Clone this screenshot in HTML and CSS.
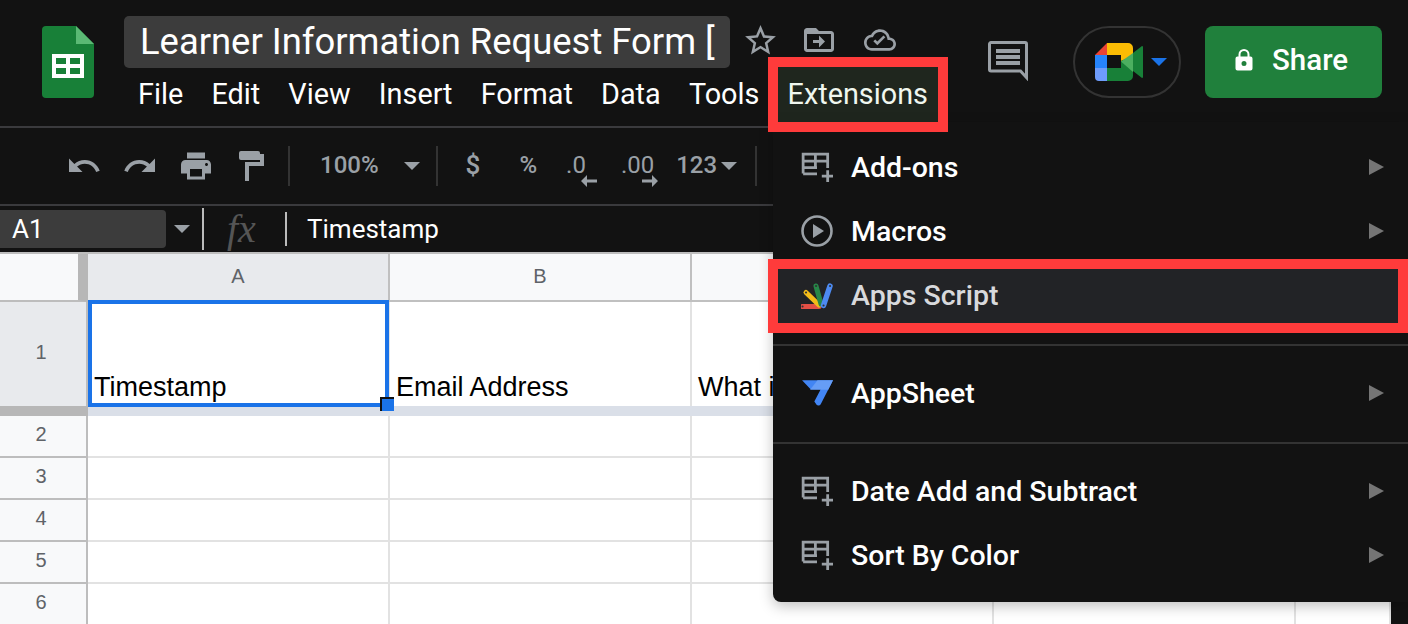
FILE: index.html
```html
<!DOCTYPE html>
<html lang="en">

<head>
    <meta charset="UTF-8">
    <title>Learner Information Request Form</title>
    <link rel="stylesheet" href="styles.css">
</head>

<body>
    <svg class="defs" width="0" height="0">
        <symbol id="addon" viewBox="0 0 30 30">
            <path d="M2 21V3h23v13M2 9.500h23M2 15.500h13M13.500 3v12.500M2 21.500h13M25 18v11M19.500 23.500h11" fill="none" stroke="#9aa0a6" stroke-width="2.600"/>
        </symbol>
    </svg>

    <header class="topbar">
        <svg class="logo" viewBox="0 0 52 72">
            <path d="M4 0h30l18 18v50a4 4 0 0 1-4 4H4a4 4 0 0 1-4-4V4a4 4 0 0 1 4-4z" fill="#188038"/>
            <path d="M34 0l18 18H34z" fill="#5bb974"/>
            <path d="M10 28h32v24H10zM14 32v6h10v-6zM28 32v6h10v-6zM14 42v6h10v-6zM28 42v6h10v-6z" fill="#fff" fill-rule="evenodd"/>
        </svg>
        <div class="title-block">
            <div class="title-row">
                <div class="title">Learner Information Request Form [</div>
                <svg class="title-icon star" viewBox="0 0 24 24"><path d="M22 9.240l-7.190-.62L12 2 9.190 8.630 2 9.240l5.460 4.730L5.820 21 12 17.270 18.180 21l-1.630-7.030L22 9.240zM12 15.400l-3.760 2.270 1-4.280-3.320-2.880 4.380-.38L12 6.100l1.710 4.040 4.380.38-3.320 2.880 1 4.280L12 15.400z"/></svg>
                <svg class="title-icon folder" viewBox="0 0 24 24"><path d="M20 6h-8l-2-2H4c-1.100 0-2 .9-2 2v12c0 1.100.9 2 2 2h16c1.100 0 2-.9 2-2V8c0-1.100-.9-2-2-2zm0 12H4V8h16v10zM12 17l4-4-4-4v3H8v2h4z"/></svg>
                <svg class="title-icon cloud" viewBox="0 0 24 24"><path d="M19.350 10.040C18.670 6.590 15.640 4 12 4 9.110 4 6.600 5.640 5.350 8.040 2.340 8.360 0 10.910 0 14c0 3.310 2.690 6 6 6h13c2.760 0 5-2.240 5-5 0-2.640-2.050-4.780-4.650-4.960zM19 18H6c-2.210 0-4-1.790-4-4 0-2.050 1.530-3.760 3.560-3.970l1.070-.11.5-.95C8.080 7.140 9.940 6 12 6c2.620 0 4.880 1.860 5.390 4.430l.3 1.500 1.530.11c1.560.1 2.780 1.410 2.780 2.960 0 1.650-1.350 3-3 3zM10 16l-3-3 1.400-1.400 1.600 1.600 4.600-4.600L16 10z"/></svg>
            </div>
            <nav class="menubar">
                <span>File</span>
                <span>Edit</span>
                <span>View</span>
                <span>Insert</span>
                <span>Format</span>
                <span>Data</span>
                <span>Tools</span>
                <span>Extensions</span>
            </nav>
        </div>
        <div class="actions">
            <svg class="comment" viewBox="0 0 40 40">
                <path d="M3 1.500h34a1.500 1.500 0 0 1 1.500 1.500v33.500l-6-6.500H3A1.500 1.500 0 0 1 1.500 28.500V3A1.500 1.500 0 0 1 3 1.500z" fill="none" stroke="#9aa0a6" stroke-width="3"/>
                <path d="M8 8h24v4H8zM8 14h24v4H8zM8 20h24v4H8z" fill="#9aa0a6"/>
            </svg>
            <div class="meet">
                <svg class="meet-logo" viewBox="0 0 48 38">
                    <path d="M12 0L0 12h12z" fill="#ea4335"/>
                    <path d="M12 0h21a5 5 0 0 1 5 5v8l-12 5v-6H12z" fill="#fbbc04"/>
                    <path d="M0 12h12v13H0z" fill="#2684fc"/>
                    <path d="M0 25h12v13H4a4 4 0 0 1-4-4z" fill="#6e9cfb"/>
                    <path d="M12 25h14v-7l12-5v20a5 5 0 0 1-5 5H12z" fill="#188038"/>
                    <path d="M26 18.500l12-8.500v19z" fill="#4caf60"/>
                    <path d="M38 10l9-7a1 1 0 0 1 1 1v30a1 1 0 0 1-1 1l-9-7z" fill="#188038"/>
                </svg>
                <span class="meet-arrow"></span>
            </div>
            <div class="share">
                <svg class="lock" viewBox="0 0 18 22"><path d="M15.500 7.500H14.500V5.500a5.500 5.500 0 0 0-11 0v2H2.500A2 2 0 0 0 .5 9.500v10a2 2 0 0 0 2 2h13a2 2 0 0 0 2-2v-10a2 2 0 0 0-2-2zM5.500 5.500a3.500 3.500 0 0 1 7 0v2h-7zM9 17a2.500 2.500 0 1 1 0-5 2.500 2.500 0 0 1 0 5z" fill="#fff"/></svg>
                <span>Share</span>
            </div>
        </div>
    </header>

    <div class="toolbar">
        <svg class="tool undo" viewBox="0 0 24 24"><path d="M12.500 8c-2.650 0-5.050.99-6.900 2.600L2 7v9h9l-3.620-3.620c1.390-1.160 3.160-1.880 5.120-1.880 3.540 0 6.550 2.310 7.600 5.500l2.370-.78C21.080 11.030 17.150 8 12.500 8z"/></svg>
        <svg class="tool redo" viewBox="0 0 24 24"><path d="M18.400 10.600C16.550 8.990 14.150 8 11.500 8c-4.650 0-8.580 3.030-9.960 7.220L3.900 16c1.050-3.190 4.050-5.500 7.600-5.500 1.950 0 3.730.72 5.120 1.880L13 16h9V7l-3.600 3.600z"/></svg>
        <svg class="tool print" viewBox="0 0 24 24"><path d="M19 8H5c-1.660 0-3 1.340-3 3v6h4v4h12v-4h4v-6c0-1.660-1.340-3-3-3zm-3 11H8v-5h8v5zm3-7c-.55 0-1-.45-1-1s.45-1 1-1 1 .45 1 1-.45 1-1 1zm-1-9H6v4h12V3z"/></svg>
        <svg class="tool paint" viewBox="0 0 26 30"><path d="M3 0h17a2 2 0 0 1 2 2v1h4v12H11v15H7V11h15V7h0v2H3a2 2 0 0 1-2-2V2a2 2 0 0 1 2-2z"/></svg>
        <span class="tool-sep sep-a"></span>
        <span class="tool-text zoom-level">100%</span>
        <span class="caret zoom-caret"></span>
        <span class="tool-sep sep-b"></span>
        <span class="tool-text dollar">$</span>
        <span class="tool-text percent">%</span>
        <span class="tool-text decimal dec-less">.0<svg class="dec-arrow" viewBox="0 0 16 12"><path d="M16 4.500H6V0L0 6l6 6V7.500h10z"/></svg></span>
        <span class="tool-text decimal dec-more">.00<svg class="dec-arrow" viewBox="0 0 16 12"><path d="M0 4.500h10V0l6 6-6 6V7.500H0z"/></svg></span>
        <span class="tool-text number">123</span>
        <span class="caret number-caret"></span>
        <span class="tool-sep sep-c"></span>
    </div>

    <div class="formula-bar">
        <div class="name-box">A1</div>
        <span class="caret name-caret"></span>
        <span class="bar-sep sep-name"></span>
        <span class="fx">fx</span>
        <span class="bar-sep sep-fx"></span>
        <span class="formula-text">Timestamp</span>
    </div>

    <main class="sheet-wrap">
        <div class="sheet">
            <div class="corner"></div>
            <div class="col-head active">A</div>
            <div class="col-head">B</div>
            <div class="col-head">C</div>
            <div class="col-head">D</div>
            <div class="col-head">E</div>

            <div class="row-head active">1</div>
            <div class="cell tall">Timestamp<div class="selection"><span class="handle"></span></div></div>
            <div class="cell tall">Email Address</div>
            <div class="cell tall">What i</div>
            <div class="cell tall"></div>
            <div class="cell tall"></div>

            <div class="freeze-corner"></div>
            <div class="freeze-bar"></div>

            <div class="row-head">2</div><div class="cell"></div><div class="cell"></div><div class="cell"></div><div class="cell"></div><div class="cell"></div>
            <div class="row-head">3</div><div class="cell"></div><div class="cell"></div><div class="cell"></div><div class="cell"></div><div class="cell"></div>
            <div class="row-head">4</div><div class="cell"></div><div class="cell"></div><div class="cell"></div><div class="cell"></div><div class="cell"></div>
            <div class="row-head">5</div><div class="cell"></div><div class="cell"></div><div class="cell"></div><div class="cell"></div><div class="cell"></div>
            <div class="row-head">6</div><div class="cell"></div><div class="cell"></div><div class="cell"></div><div class="cell"></div><div class="cell"></div>
        </div>
        <div class="side-strip"></div>
    </main>

    <div class="dropdown">
        <div class="menu-item">
            <svg class="item-icon"><use href="#addon"/></svg>
            <span class="item-label">Add-ons</span><span class="item-arrow"></span>
        </div>
        <div class="menu-item">
            <svg class="item-icon" viewBox="0 0 32 32"><circle cx="16" cy="16" r="14.500" fill="none" stroke="#9aa0a6" stroke-width="2.600"/><path d="M12 9l11 7-11 7z" fill="#9aa0a6"/></svg>
            <span class="item-label">Macros</span><span class="item-arrow"></span>
        </div>
        <div class="menu-item">
            <svg class="item-icon" viewBox="0 0 32 28">
                <path d="M1.500 25.500H18" stroke="#ea4335" stroke-width="5" stroke-linecap="round"/>
                <path d="M5 11.500L18 24" stroke="#fbbc04" stroke-width="5" stroke-linecap="round"/>
                <path d="M15 5L20 23" stroke="#188038" stroke-width="5" stroke-linecap="round"/>
                <path d="M29 5L22.500 24.500" stroke="#4285f4" stroke-width="5.500" stroke-linecap="round"/>
                <path d="M1.500 25.500h.1M5 11.500h.1M15 5h.1M29 5h.1M22.500 24.500h.1" stroke="#222" stroke-width="2" stroke-linecap="round"/>
            </svg>
            <span class="item-label dimmed">Apps Script</span>
        </div>
        <div class="menu-divider"></div>
        <div class="menu-item">
            <svg class="item-icon" viewBox="0 0 30 26">
                <path d="M1 1h29l-11.500 22.500a2.500 2.500 0 0 1-4.500-.5l-1.500-2 6-11.500H9z" fill="#4285f4"/>
                <path d="M15.500 1H30l-4.500 9H8.500z" fill="#669df6"/>
            </svg>
            <span class="item-label">AppSheet</span><span class="item-arrow"></span>
        </div>
        <div class="menu-divider"></div>
        <div class="menu-item">
            <svg class="item-icon"><use href="#addon"/></svg>
            <span class="item-label">Date Add and Subtract</span><span class="item-arrow"></span>
        </div>
        <div class="menu-item">
            <svg class="item-icon"><use href="#addon"/></svg>
            <span class="item-label">Sort By Color</span><span class="item-arrow"></span>
        </div>
    </div>

    <div class="callout callout-menu"></div>
    <div class="callout callout-item"></div>
</body>

</html>
```

FILE: styles.css
```css
html, body {
    margin: 0;
    padding: 0;
    height: 624px;
    overflow: hidden;
}

body {
    position: relative;
    width: 1408px;
    background-color: #121212;
    font-family: Roboto, "Liberation Sans", sans-serif;
    color: #fff;
}

.defs {
    position: absolute;
}

/* top bar */
.topbar {
    display: flex;
    height: 126px;
    border-bottom: 2px solid #3a3a3d;
}

.logo {
    width: 52px;
    height: 72px;
    margin: 26px 0 0 42px;
    flex: none;
}

.title-block {
    margin: 16px 0 0 30px;
    width: 790px;
    flex: none;
}

.title-row {
    display: flex;
    align-items: center;
}

.title {
    width: 606px;
    height: 52px;
    box-sizing: border-box;
    padding-left: 16px;
    background-color: #3c3c3c;
    border-radius: 5px;
    font-size: 36.4px;
    line-height: 51px;
    white-space: nowrap;
    overflow: hidden;
    flex: none;
}

.title-icon {
    fill: #9aa0a6;
    flex: none;
    margin-bottom: 4px;
}

.star {
    width: 37px;
    height: 37px;
    margin-left: 12px;
}

.folder {
    width: 36px;
    height: 36px;
    margin-left: 22px;
}

.cloud {
    width: 32px;
    height: 32px;
    margin-left: 27px;
}

.menubar {
    display: flex;
    gap: 28.200px;
    margin: 8px 0 0 14px;
    font-size: 28.800px;
    line-height: 36px;
}

.actions {
    display: flex;
    align-items: flex-start;
    flex: none;
    width: 406px;
    margin-left: 74px;
}

.comment {
    width: 40px;
    height: 40px;
    margin: 41px 0 0 0;
    flex: none;
}

.meet {
    display: flex;
    align-items: center;
    box-sizing: border-box;
    width: 108px;
    height: 72px;
    margin: 26px 0 0 45px;
    padding-left: 20px;
    border: 2px solid #333;
    border-radius: 36px;
}

.meet-logo {
    width: 48px;
    height: 38px;
    flex: none;
}

.meet-arrow {
    margin-left: 8px;
    border-style: solid;
    border-width: 8px 8px 0;
    border-color: #1a73e8 transparent transparent;
}

.share {
    display: flex;
    align-items: center;
    width: 177px;
    height: 72px;
    margin: 26px 0 0 24px;
    padding: 0 0 4px 30px;
    box-sizing: border-box;
    background-color: #20803c;
    border-radius: 8px;
    font-size: 29.500px;
    font-weight: 500;
}

.lock {
    width: 18px;
    height: 22px;
    margin-right: 19px;
}

/* toolbar */
.toolbar {
    display: flex;
    align-items: center;
    height: 76px;
    border-bottom: 2px solid #3a3a3d;
    padding-left: 66px;
    color: #9aa0a6;
    font-weight: 500;
}

.tool {
    width: 36px;
    height: 36px;
    fill: #9aa0a6;
    flex: none;
}

.redo {
    margin-left: 20px;
}

.print {
    margin-left: 20px;
}

.paint {
    width: 26px;
    height: 30px;
    margin-left: 24px;
}

.tool-sep {
    width: 2px;
    height: 40px;
    background-color: #333;
    flex: none;
}

.sep-a {
    margin-left: 24px;
}

.tool-text {
    font-size: 24px;
    flex: none;
    margin-bottom: 2px;
}

.zoom-level {
    margin-left: 30px;
}

.caret {
    width: 0;
    height: 0;
    flex: none;
    border-style: solid;
    border-width: 8px 8px 0;
    border-color: #9aa0a6 transparent transparent;
}

.zoom-caret {
    margin-left: 25px;
}

.sep-b {
    margin-left: 16px;
}

.dollar {
    margin-left: 28px;
    font-size: 26px;
}

.percent {
    margin-left: 39px;
}

.decimal {
    position: relative;
    font-weight: 400;
}

.dec-less {
    margin-left: 29px;
}

.dec-more {
    margin-left: 35px;
}

.dec-arrow {
    position: absolute;
    right: -11px;
    top: 24px;
    width: 16px;
    height: 12px;
    fill: #9aa0a6;
}

.dec-more .dec-arrow {
    right: -4px;
}

.number {
    margin-left: 22px;
}

.number-caret {
    margin-left: 4px;
}

.sep-c {
    margin-left: 18px;
}

/* formula bar */
.formula-bar {
    display: flex;
    align-items: center;
    height: 46px;
    border-bottom: 2px solid #bdbdbd;
}

.name-box {
    width: 166px;
    height: 38px;
    box-sizing: border-box;
    padding-left: 12px;
    background-color: #3c3c3c;
    border-radius: 0 4px 4px 0;
    font-size: 26px;
    line-height: 38px;
}

.name-caret {
    margin-left: 8px;
}

.bar-sep {
    width: 2px;
    background-color: #bbb;
    flex: none;
}

.sep-name {
    height: 42px;
    margin-left: 12px;
}

.fx {
    width: 36px;
    margin-left: 23px;
    font-family: "Liberation Serif", serif;
    font-style: italic;
    font-size: 40px;
    line-height: 46px;
    color: #555;
}

.sep-fx {
    height: 34px;
    margin-left: 22px;
}

.formula-text {
    margin-left: 20px;
    font-size: 26px;
}

/* grid */
.sheet-wrap {
    display: flex;
    height: 370px;
    overflow: hidden;
}

.sheet {
    display: grid;
    grid-template-columns: 88px repeat(4, 302px) 95px;
    grid-template-rows: 48px 104px 10px repeat(5, 42px);
    flex: none;
    width: 1391px;
    background-color: #fff;
    overflow: hidden;
    font-family: "Liberation Sans", Arial, sans-serif;
}

.corner {
    background-color: #f8f9fa;
    border-right: 10px solid #b7b7b7;
    border-bottom: 2px solid #bdbdbd;
    box-sizing: border-box;
}

.col-head {
    display: flex;
    align-items: center;
    justify-content: center;
    box-sizing: border-box;
    padding-bottom: 2px;
    background-color: #f8f9fa;
    border-right: 2px solid #c0c0c0;
    border-bottom: 2px solid #c0c0c0;
    color: #5f6368;
    font-size: 20px;
}

.col-head.active, .row-head.active {
    background-color: #e8eaed;
}

.row-head {
    display: flex;
    align-items: center;
    justify-content: center;
    box-sizing: border-box;
    padding: 0 4px 4px 0;
    background-color: #f8f9fa;
    border-right: 2px solid #bdbdbd;
    border-bottom: 2px solid #bdbdbd;
    color: #5f6368;
    font-size: 20px;
}

.row-head.active {
    border-bottom: 0;
}

.cell {
    position: relative;
    box-sizing: border-box;
    border-right: 2px solid #e2e2e2;
    border-bottom: 2px solid #e2e2e2;
    min-width: 0;
}

.cell.tall {
    display: flex;
    align-items: flex-end;
    padding: 0 0 2px 6px;
    border-bottom: 0;
    color: #000;
    font-size: 27px;
    line-height: 34px;
    white-space: nowrap;
}

.selection {
    position: absolute;
    left: 0;
    top: -2px;
    right: -1px;
    bottom: -1px;
    border: 4px solid #1a73e8;
    box-sizing: border-box;
}

.handle {
    position: absolute;
    right: -9px;
    bottom: -8px;
    width: 14px;
    height: 14px;
    box-sizing: border-box;
    background-color: #1a73e8;
    border-left: 2px solid #111;
    border-top: 2px solid #111;
}

.freeze-corner {
    background-color: #b7b7b7;
    border-right: 1px solid #b7b7b7;
}

.freeze-bar {
    grid-column: 2 / -1;
    background-color: #dadfe8;
}

.side-strip {
    flex: 1;
    background-color: #121212;
}

/* extensions menu */
.dropdown {
    position: absolute;
    left: 773px;
    top: 122px;
    width: 635px;
    height: 480px;
    box-sizing: border-box;
    padding-top: 13px;
    background-color: #121212;
    border-radius: 0 0 0 8px;
    box-shadow: 0 4px 14px rgba(0, 0, 0, 0.25);
}

.menu-item {
    display: flex;
    align-items: center;
    height: 64px;
    font-size: 28.500px;
    font-weight: 500;
}

.item-icon {
    width: 32px;
    height: 32px;
    margin-left: 28px;
    flex: none;
}

.item-label {
    margin-left: 18px;
    flex: 1;
}

.item-label.dimmed {
    color: #ddd;
}

.item-arrow {
    margin-right: 24px;
    border-style: solid;
    border-width: 8px 0 8px 15px;
    border-color: transparent transparent transparent #757575;
}

.menu-divider {
    height: 2px;
    margin: 17px 0 15px;
    background-color: #333;
}

/* red annotations */
.callout {
    position: absolute;
    box-sizing: border-box;
    border: 10px solid #ff3b3b;
}

.callout-menu {
    left: 768px;
    top: 57px;
    width: 180px;
    height: 75px;
    background-color: rgba(135, 193, 126, 0.12);
}

.callout-item {
    left: 768px;
    top: 259px;
    width: 640px;
    height: 74px;
    background-color: rgba(178, 188, 218, 0.1);
}
```
